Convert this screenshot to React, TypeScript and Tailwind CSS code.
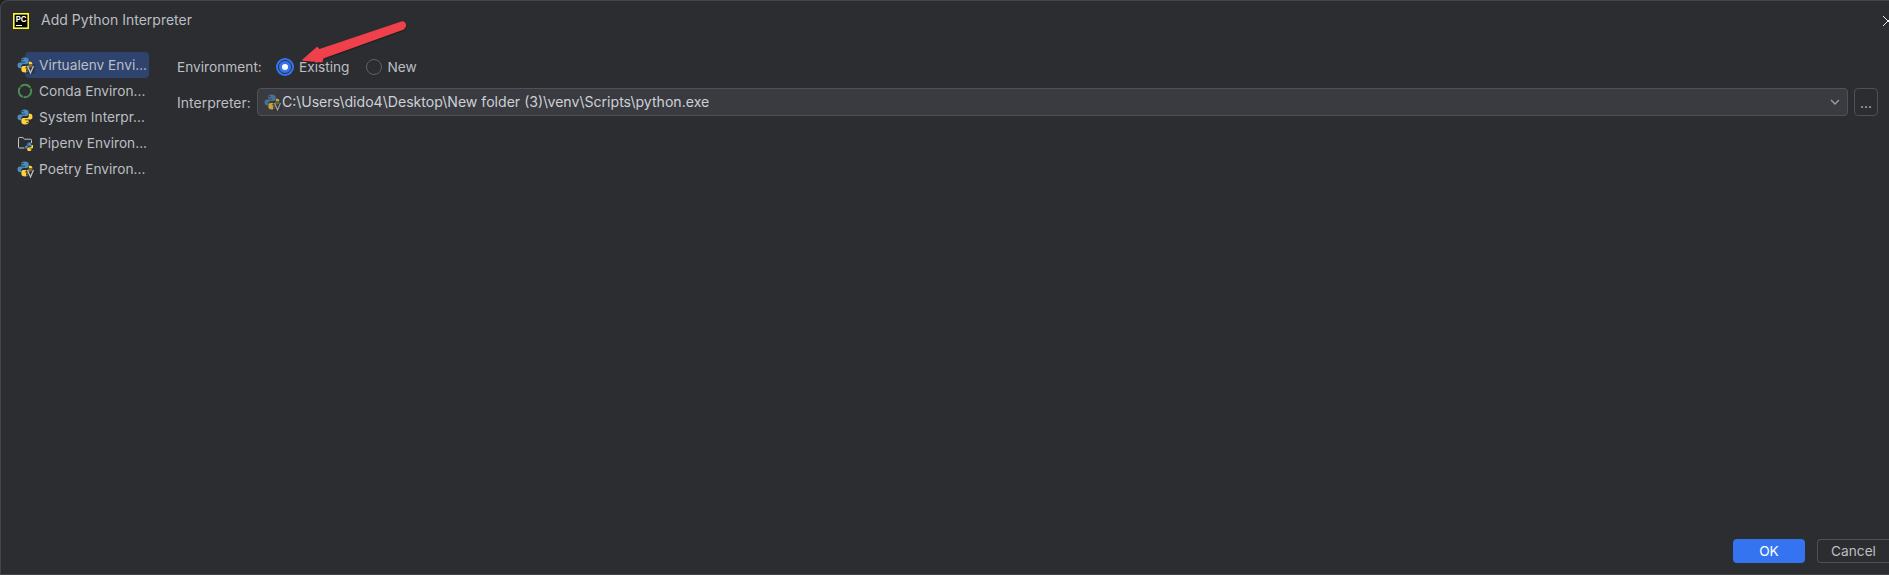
import React from "react";

const BLUE = "M7.900 1C5 1 4.600 2.100 4.600 3.200V5h3.500v.7H3C1.800 5.700 1 6.700 1 8.300c0 1.700.8 2.700 2 2.700h1.400V9.200c0-1.200 1-2.200 2.200-2.200h3c1 0 1.800-.8 1.800-1.800V3.200C11.400 2 10.300 1 7.900 1ZM6 2.200a.7.7 0 1 1 0 1.400.7.7 0 0 1 0-1.400Z";
const GOLD = "M8.100 15c2.900 0 3.300-1.100 3.300-2.200V11H7.900v-.7H13c1.200 0 2-1 2-2.600 0-1.700-.8-2.700-2-2.700h-1.400v1.800c0 1.200-1 2.200-2.200 2.200h-3c-1 0-1.800.8-1.800 1.800v2C4.600 14 5.700 15 8.100 15Zm1.900-1.200a.7.7 0 1 1 0-1.400.7.7 0 0 1 0 1.400Z";

function Py() {
  return (
    <svg width="16" height="16" viewBox="0.500 0.500 15 15" className="shrink-0 block">
      <path fill="#4b8bbe" fillRule="evenodd" d={BLUE} />
      <path fill="#ffd43b" fillRule="evenodd" d={GOLD} />
    </svg>
  );
}

function Venv({ dim = false }: { dim?: boolean }) {
  return (
    <span className={`relative w-4 h-4 shrink-0 block ${dim ? "opacity-70" : ""}`}>
      <Py />
      <svg width="9" height="10" viewBox="0 0 9 10" className="absolute right-[-2px] bottom-[-1px]">
        <path d="M0 0h9v10H0z" fill="#2b2d30" opacity="0.6" />
        <path d="M1.500 2 4.500 9 7.500 2" fill="none" stroke="#c4c7ce" strokeWidth="1.200" />
      </svg>
    </span>
  );
}

function Conda() {
  return (
    <svg width="16" height="16" viewBox="0 0 16 16" className="shrink-0 block">
      <circle cx="8" cy="8" r="6.200" fill="none" stroke="#4f8a52" strokeWidth="2" strokeDasharray="11 0.800" />
    </svg>
  );
}

function PipenvIcon() {
  return (
    <svg width="16" height="16" viewBox="0 0 16 16" className="shrink-0 block">
      <path d="M1.500 12V3.500a1 1 0 0 1 1-1h3.300l1.700 1.700h6a1 1 0 0 1 1 1V8" fill="none" stroke="#c4c7ce" strokeWidth="1" />
      <path d="M1.500 12a1 1 0 0 0 1 1h5" fill="none" stroke="#c4c7ce" strokeWidth="1" />
      <g transform="translate(7.500 7) scale(0.600)">
        <path fill="#4b8bbe" d={BLUE} />
        <path fill="#ffd43b" d={GOLD} />
      </g>
    </svg>
  );
}

const items: { label: string; icon: React.ReactNode; selected?: boolean }[] = [
  { label: "Virtualenv Envi...", icon: <Venv />, selected: true },
  { label: "Conda Environ...", icon: <Conda /> },
  { label: "System Interpr...", icon: <Py /> },
  { label: "Pipenv Environ...", icon: <PipenvIcon /> },
  { label: "Poetry Environ...", icon: <Venv /> },
];

const ARROW = "M8 45 22.300 32.700 24 35 106.700 7.300C110 6.500 112 11 108 14L28 42.700 26.700 46.700Z";

export default function App() {
  return (
    <div className="relative w-[1889px] h-[575px] overflow-hidden bg-[#1f2023]">
      <div className="flex flex-col h-[575px] rounded-tl-[8px] bg-[#2b2d30] border-t border-l border-b border-[#43454a] text-[13.700px] text-[#bcbec4] font-['Inter',sans-serif]">
        <header className="flex items-center h-[39px] pl-[12px] shrink-0">
          <svg width="16" height="16" viewBox="0 0 16 16" className="shrink-0 block">
            <rect x="0.800" y="0.800" width="14.400" height="14.400" fill="#000" stroke="#fdfb2e" strokeWidth="1.600" />
            <text x="2.800" y="9" fontSize="7.800" fontWeight="700" fill="#fff" fontFamily="Inter, sans-serif">PC</text>
            <rect x="3" y="12" width="6" height="1" fill="#fff" />
          </svg>
          <span className="ml-[12px] text-[14px] leading-[18px] mb-[1px]">Add Python Interpreter</span>
          <div className="ml-auto mr-[-5px] w-3 h-3">
            <svg width="12" height="12" viewBox="0 0 12 12" className="block">
              <path d="M1 1 11 11M11 1 1 11" stroke="#f0f1f3" strokeWidth="1" fill="none" />
            </svg>
          </div>
        </header>

        <div className="flex flex-1 min-h-0">
          <aside className="w-[148px] pt-[12px] shrink-0 flex flex-col">
            {items.map((it) => (
              <div key={it.label} className="relative flex items-center h-[26px] pl-[16px]">
                {it.selected && <div className="absolute left-[24px] right-0 top-0 bottom-0 rounded-[4px] bg-[#2e436e]" />}
                <span className="relative">{it.icon}</span>
                <span className="relative ml-[6px] whitespace-nowrap">{it.label}</span>
              </div>
            ))}
          </aside>

          <main className="flex-1 min-w-0 pl-[28px] pr-[11px] pt-[13px] flex flex-col">
            <div className="flex items-center h-[28px]">
              <span className="w-[99px]">Environment:</span>
              <span className="w-[18px] h-[18px] rounded-full bg-[#3574f0] flex items-center justify-center shrink-0">
                <span className="w-[14px] h-[14px] rounded-full border-[1px] border-[#2b2d30] bg-[#3574f0] flex items-center justify-center">
                  <span className="w-[6px] h-[6px] rounded-full bg-white" />
                </span>
              </span>
              <span className="ml-[5px]">Existing</span>
              <span className="ml-[16px] w-4 h-4 rounded-full border border-[#5f6167] shrink-0" />
              <span className="ml-[6px]">New</span>
            </div>
            <div className="flex items-center h-[28px] mt-[7px]">
              <span className="w-[80px] text-[14px]">Interpreter:</span>
              <div className="flex-1 h-[28px] flex items-center bg-[#393b40] border border-[#4e5157] rounded-[4px] pl-[6px] pr-[6px]">
                <Venv dim />
                <span className="ml-[2px] text-[14.100px] text-[#ced0d6]">C:\Users\dido4\Desktop\New folder (3)\venv\Scripts\python.exe</span>
                <svg width="12" height="12" viewBox="0 0 12 12" className="ml-auto">
                  <path d="M2 4 6 8 10 4" fill="none" stroke="#9da0a8" strokeWidth="1.300" />
                </svg>
              </div>
              <div className="ml-[6px] w-[24px] h-[28px] rounded-[4px] border border-[#4e5157] flex items-center justify-center shrink-0 text-[14px]">...</div>
            </div>
          </main>
        </div>

        <footer className="flex justify-end items-start h-[35px] shrink-0 gap-[12px]">
          <button className="w-[72px] h-[24px] rounded-[4px] bg-[#3574f0] text-white">OK</button>
          <button className="w-[72px] h-[24px] rounded-l-[4px] border border-r-0 border-[#4e5157] text-[#bcbec4]">Cancel</button>
        </footer>
      </div>

      <svg width="120" height="55" viewBox="0 0 120 55" className="absolute left-[295px] top-[15px] pointer-events-none">
        <path d={ARROW} fill="#000" opacity="0.25" transform="translate(1 2)" />
        <path d={ARROW} fill="#f0404c" stroke="#f0404c" strokeWidth="1.600" strokeLinejoin="round" />
      </svg>
    </div>
  );
}
